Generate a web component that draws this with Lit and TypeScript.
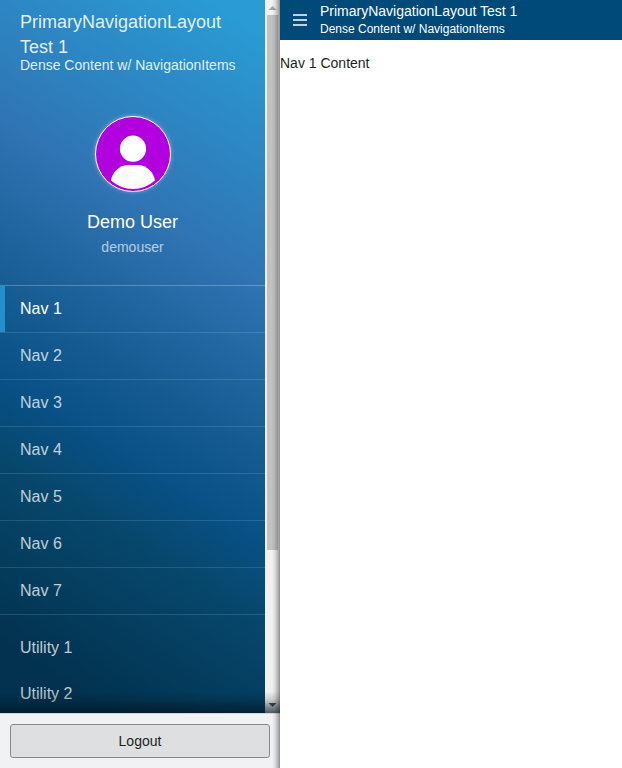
import { LitElement, html, css, svg } from "lit";
import { customElement, property } from "lit/decorators.js";
import { classMap } from "lit/directives/class-map.js";

@customElement("user-profile")
class UserProfile extends LitElement {
  @property() name = "";
  @property() detail = "";

  static styles = css`
    :host {
      display: flex;
      flex-direction: column;
      align-items: center;
      color: #fff;
    }
    .avatar {
      box-sizing: border-box;
      width: 76px;
      height: 76px;
      border: 1px solid #fff;
      border-radius: 50%;
      overflow: hidden;
      background: #b200de;
      box-shadow: 0 0 4px rgba(255, 255, 255, 0.4);
    }
    svg {
      display: block;
    }
    .name {
      margin-top: 18px;
      font-size: 18px;
      line-height: 25px;
    }
    .detail {
      font-size: 14px;
      line-height: 25px;
      opacity: 0.65;
    }
  `;

  render() {
    return html`
      <div class="avatar">
        ${svg`<svg width="74" height="74" viewBox="0 0 74 74" fill="#fff">
          <circle cx="37" cy="31.700" r="13.100" />
          <path d="M15 63.500C16 56 22.500 48 33 48H41C51.500 48 58 56 59 63.500Q49 72 37 72Q25 72 15 63.500Z" />
        </svg>`}
      </div>
      <div class="name">${this.name}</div>
      <div class="detail">${this.detail}</div>
    `;
  }
}

@customElement("app-root")
class AppRoot extends LitElement {
  private navItems = [1, 2, 3, 4, 5, 6, 7].map((n) => `Nav ${n}`);
  private utilities = ["Utility 1", "Utility 2"];

  static styles = css`
    :host {
      display: flex;
      height: 768px;
      overflow: hidden;
      background: #fff;
      color: #1c1f21;
      font-family: "Liberation Sans", Arial, sans-serif;
      font-size: 14px;
    }
    .drawer {
      position: relative;
      flex: none;
      display: flex;
      flex-direction: column;
      width: 280px;
    }
    .drawer::after {
      content: "";
      position: absolute;
      inset: 0 0 0 auto;
      width: 8px;
      background: linear-gradient(
        to right,
        rgba(0, 0, 0, 0),
        rgba(0, 0, 0, 0.08) 35%,
        rgba(0, 0, 0, 0.26) 75%,
        rgba(0, 0, 0, 0.42)
      );
    }
    .scroller {
      position: relative;
      display: flex;
      height: 713px;
      overflow: hidden;
    }
    .scroller::after {
      content: "";
      position: absolute;
      inset: auto 0 0 0;
      height: 22px;
      background: linear-gradient(
        to top,
        rgba(0, 20, 32, 0.68),
        rgba(0, 20, 32, 0.48) 25%,
        rgba(0, 20, 32, 0.17) 60%,
        rgba(0, 20, 32, 0)
      );
    }
    .menu {
      width: 265px;
      background: linear-gradient(
        32deg,
        #02324f 8%,
        #07476c 29%,
        #085085 38%,
        #1b6098 52%,
        #3073b3 67%,
        #2a9bd4 96%
      );
    }
    .heading {
      box-sizing: border-box;
      height: 116px;
      padding: 10px 20px 0;
      color: rgba(255, 255, 255, 0.88);
    }
    .title {
      font-size: 18px;
      line-height: 25px;
    }
    .subtitle {
      margin-top: -2px;
      font-size: 14px;
      line-height: 14px;
    }
    user-profile {
      height: 169px;
    }
    .items {
      border-top: 1px solid rgba(255, 255, 255, 0.25);
    }
    .item {
      box-sizing: border-box;
      height: 47px;
      padding-left: 20px;
      border-bottom: 1px solid rgba(255, 255, 255, 0.13);
      font-size: 16px;
      line-height: 46px;
      color: rgba(255, 255, 255, 0.75);
    }
    .item.active {
      color: #fff;
      background: linear-gradient(#248fcb, #248fcb) left / 5px 100% no-repeat;
    }
    .utilities {
      padding-top: 10px;
    }
    .utility {
      height: 46px;
      padding-left: 20px;
      font-size: 16px;
      line-height: 46px;
      color: rgba(255, 255, 255, 0.75);
    }
    .scrollbar {
      display: flex;
      flex-direction: column;
      align-items: center;
      width: 15px;
      background: #f1f1f1;
    }
    .scrollbar svg {
      flex: none;
      display: block;
    }
    .thumb {
      width: 11px;
      height: 535px;
      background: #c1c1c1;
    }
    .grow {
      flex: 1;
    }
    .footer {
      box-sizing: border-box;
      height: 55px;
      padding: 10px;
      border-top: 1px solid #d4d7d9;
      background: #f1f2f4;
    }
    .logout {
      display: block;
      box-sizing: border-box;
      width: 260px;
      height: 34px;
      padding: 0;
      border: 1px solid #868a8c;
      border-radius: 3px;
      background: #dedfe0;
      color: #1c1f21;
      font: inherit;
    }
    .main {
      flex: 1;
      min-width: 0;
    }
    .header {
      display: flex;
      align-items: center;
      height: 40px;
      background: #004a79;
      color: #fff;
    }
    .toggle {
      display: flex;
      flex-direction: column;
      gap: 3px;
      width: 14px;
      padding: 0 13px;
    }
    .bar {
      height: 2px;
      background: rgba(255, 255, 255, 0.75);
    }
    .header-title {
      font-size: 14px;
      line-height: 20px;
    }
    .header-sub {
      font-size: 12px;
      line-height: 16px;
    }
    .header-text {
      padding-bottom: 2px;
    }
    .content {
      margin: 14px 0 0;
      line-height: 18px;
    }
  `;

  render() {
    return html`
      <div class="drawer">
        <div class="scroller">
          <nav class="menu">
            <div class="heading">
              <div class="title">PrimaryNavigationLayout Test 1</div>
              <div class="subtitle">Dense Content w/ NavigationItems</div>
            </div>
            <user-profile name="Demo User" detail="demouser"></user-profile>
            <div class="items">
              ${this.navItems.map(
                (label, i) =>
                  html`<div class=${classMap({ item: true, active: i === 0 })}>${label}</div>`
              )}
            </div>
            <div class="utilities">
              ${this.utilities.map((label) => html`<div class="utility">${label}</div>`)}
            </div>
          </nav>
          <div class="scrollbar">
            <svg width="15" height="15"><path d="M3.500 10L7.500 6L11.500 10Z" fill="#a3a3a3" /></svg>
            <div class="thumb"></div>
            <div class="grow"></div>
            <svg width="15" height="15"><path d="M3.500 5L7.500 9L11.500 5Z" fill="#505050" /></svg>
          </div>
        </div>
        <div class="footer"><button class="logout">Logout</button></div>
      </div>
      <main class="main">
        <header class="header">
          <div class="toggle">
            <div class="bar"></div>
            <div class="bar"></div>
            <div class="bar"></div>
          </div>
          <div class="header-text">
            <div class="header-title">PrimaryNavigationLayout Test 1</div>
            <div class="header-sub">Dense Content w/ NavigationItems</div>
          </div>
        </header>
        <p class="content">Nav 1 Content</p>
      </main>
    `;
  }
}
